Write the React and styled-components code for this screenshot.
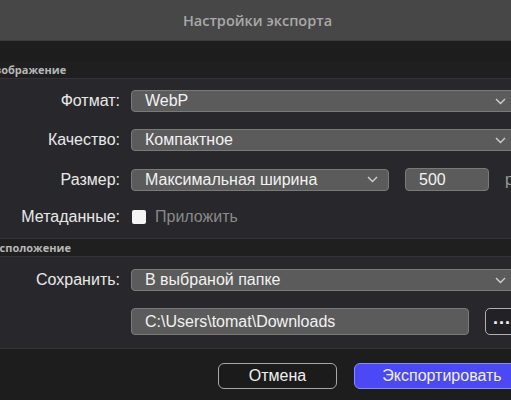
import styled, { createGlobalStyle } from "styled-components";

const GlobalStyle = createGlobalStyle`
  html, body {
    margin: 0;
    padding: 0;
    background: #1d1d1d;
    overflow: hidden;
  }
  body {
    font-family: "Liberation Sans", Arial, sans-serif;
  }
`;

const Dialog = styled.div`
  width: 545px;
  height: 400px;
  margin-left: -15px;
  background: #1d1d1d;
  display: flex;
  flex-direction: column;
  overflow: hidden;
`;

const TitleBar = styled.div`
  height: 40px;
  background: #474747;
  border-bottom: 1px solid #3a3a3a;
  display: flex;
  align-items: center;
  justify-content: center;
  font-family: "Open Sans", sans-serif;
  font-weight: 600;
  font-size: 14.5px;
  color: #a9a9a9;
`;

const Body = styled.div`
  padding-top: 20px;
  display: flex;
  flex-direction: column;
`;

const SectionHeader = styled.div`
  height: 17px;
  display: flex;
  align-items: center;
  padding-left: 1px;
  background: #1f1f1f;
  border-bottom: 1px solid #343438;
  font-family: "Open Sans", sans-serif;
  font-weight: 700;
  font-size: 11px;
  color: #b8b8b8;
`;

const SectionBody = styled.div`
  background: #28282c;
  border-bottom: 1px solid #343438;
  padding: ${(p) => p.$pad};
  padding-left: 15px;
  padding-right: 13px;
  display: flex;
  flex-direction: column;
  gap: 17px;
`;

const Row = styled.div`
  display: flex;
  align-items: center;
  gap: 11px;
`;

const Label = styled.div`
  width: 120px;
  flex: none;
  text-align: right;
  font-size: 16px;
  color: #e8e8e8;
`;

const Controls = styled.div`
  flex: 1;
  display: flex;
  align-items: center;
  gap: 16px;
`;

const Select = styled.div`
  box-sizing: border-box;
  height: ${(p) => p.$h || 22}px;
  width: ${(p) => (p.$w ? `${p.$w}px` : "auto")};
  flex: ${(p) => (p.$w ? "none" : "1")};
  background: #5b5b5b;
  border: 1px solid #7a7a7a;
  border-radius: 4px;
  display: flex;
  align-items: center;
  justify-content: space-between;
  padding: 0 10px 0 13px;
  font-size: 16px;
  color: #f2f2f2;
`;

const Chevron = () => (
  <svg width="11" height="7" viewBox="0 0 11 7" fill="none">
    <path d="M1 1l4.5 4.5L10 1" stroke="#d0d0d0" strokeWidth="1.4" />
  </svg>
);

const Unit = styled.span`
  font-size: 16px;
  color: #9a9a9a;
`;

const Check = styled.span`
  width: 14px;
  height: 14px;
  border-radius: 2px;
  background: #f4f4f4;
  margin-left: 1px;
`;

const CheckText = styled.span`
  font-size: 16px;
  color: #8a8a8a;
  margin-left: -7px;
`;

const DotsButton = styled.div`
  box-sizing: border-box;
  width: 34px;
  height: 27px;
  flex: none;
  border: 1.5px solid #b0b0b0;
  border-radius: 5px;
  background: #222226;
  display: flex;
  align-items: center;
  justify-content: flex-start;
  padding-left: 7px;
  color: #f0f0f0;
  font-size: 18px;
  font-weight: 700;
  letter-spacing: 1px;
  padding-bottom: 6px;
  margin-right: -2px;
`;

const Footer = styled.div`
  display: flex;
  justify-content: flex-end;
  gap: 17px;
  padding-top: 14px;
`;

const Button = styled.div`
  box-sizing: border-box;
  width: ${(p) => p.$w}px;
  height: 26px;
  border-radius: 6px;
  display: flex;
  align-items: center;
  justify-content: center;
  font-size: 16px;
  color: #f0f0f0;
  background: ${(p) => (p.$primary ? "#4b48f5" : "#1b1b1b")};
  border: 1.5px solid ${(p) => (p.$primary ? "#8a88ff" : "#a8a8a8")};
`;

export default function App() {
  return (
    <>
      <GlobalStyle />
      <Dialog>
        <TitleBar>Настройки экспорта</TitleBar>
        <Body>
          <SectionHeader>Изображение</SectionHeader>
          <SectionBody $pad="11px 0 12px">
            <Row>
              <Label>Фотмат:</Label>
              <Controls>
                <Select>
                  WebP
                  <Chevron />
                </Select>
              </Controls>
            </Row>
            <Row>
              <Label>Качество:</Label>
              <Controls>
                <Select>
                  Компактное
                  <Chevron />
                </Select>
              </Controls>
            </Row>
            <Row>
              <Label>Размер:</Label>
              <Controls>
                <Select $w={258}>
                  Максимальная ширина
                  <Chevron />
                </Select>
                <Select $w={84} $h={23}>500</Select>
                <Unit>px</Unit>
              </Controls>
            </Row>
            <Row>
              <Label>Метаданные:</Label>
              <Controls>
                <Check />
                <CheckText>Приложить</CheckText>
              </Controls>
            </Row>
          </SectionBody>
          <SectionHeader>Расположение</SectionHeader>
          <SectionBody $pad="12px 0 13px">
            <Row>
              <Label>Сохранить:</Label>
              <Controls>
                <Select>
                  В выбраной папке
                  <Chevron />
                </Select>
              </Controls>
            </Row>
            <Row>
              <Label />
              <Controls>
                <Select $h={27}>C:\Users\tomat\Downloads</Select>
                <DotsButton>...</DotsButton>
              </Controls>
            </Row>
          </SectionBody>
          <Footer>
            <Button $w={119}>Отмена</Button>
            <Button $w={176} $primary>
              Экспортировать
            </Button>
          </Footer>
        </Body>
      </Dialog>
    </>
  );
}
